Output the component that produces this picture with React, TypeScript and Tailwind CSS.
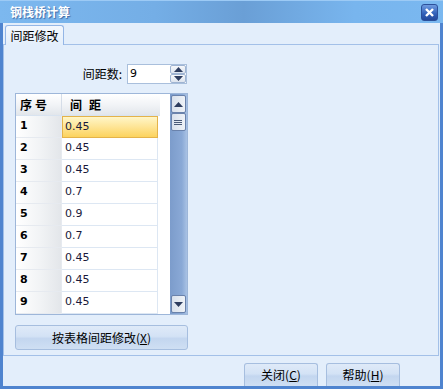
import React from "react";

const cjk = { fontFamily: '"Noto Sans CJK SC", "Liberation Sans", sans-serif' };
const num = { fontFamily: '"DejaVu Sans", "Liberation Sans", sans-serif' };

const rows = ["0.45", "0.45", "0.45", "0.7", "0.9", "0.7", "0.45", "0.45", "0.45"];

function Arrow({ up }: { up: boolean }) {
  return (
    <svg width="9" height="5" viewBox="0 0 9 5">
      {up ? <path d="M0 5 L4.5 0 L9 5 Z" fill="#2d3c5e" /> : <path d="M0 0 L4.5 5 L9 0 Z" fill="#2d3c5e" />}
    </svg>
  );
}

export default function App() {
  return (
    <div className="w-[443px] h-[389px] flex flex-col bg-[#4f84cf] overflow-hidden" style={cjk}>
      {/* title bar */}
      <div className="h-[23px] shrink-0 flex items-center justify-between pl-[10px] pr-[5px] bg-[linear-gradient(90deg,#7cb8ef_0%,#74aee6_35%,#6a9fd6_55%,#78b5ee_80%,#7ab8f0_100%)] border-t border-[#9ccaf5]">
        <span className="text-white text-[12px] font-bold leading-none [text-shadow:1px_1px_1px_#3a6aa8]">钢栈桥计算</span>
        <div className="w-[17px] h-[17px] rounded-[3px] border border-[#2b4f9a] bg-[linear-gradient(180deg,#6f9be0_0%,#2f5fb8_60%,#23489a_100%)] flex items-center justify-center">
          <svg width="9" height="9" viewBox="0 0 9 9">
            <path d="M1 1 L8 8 M8 1 L1 8" stroke="white" strokeWidth="2.4" />
          </svg>
        </div>
      </div>
      {/* body */}
      <div className="flex-1 mx-[3px] mb-[3px] bg-[#e3eefb] flex flex-col">
        {/* tab strip */}
        <div className="h-[21px] shrink-0 flex items-end pl-[2px]">
          <div className="h-[20px] w-[59px] border border-b-0 border-[#94b6e6] rounded-t-[3px] flex items-center justify-center text-[12px] text-black -mb-px relative z-10 bg-[linear-gradient(180deg,#f4f8fd_0%,#e3eefb_100%)]">
            间距修改
          </div>
        </div>
        {/* panel */}
        <div className="h-[312px] mr-[1px] border border-[#a3c0e8] flex flex-col pl-[11px] pt-[19px]">
          {/* spinner row */}
          <div className="flex items-center h-[20px]">
            <div className="w-[112px] text-right text-[12px] text-black pr-[5px] leading-none">间距数:</div>
            <div className="w-[60px] h-[20px] border border-[#a9bfdc] bg-white flex items-center">
              <span className="flex-1 pl-[2px] text-[11px] text-black" style={num}>9</span>
              <div className="w-[16px] h-[18px] flex flex-col">
                <div className="h-[9px] border border-[#9fb4d2] rounded-[2px] bg-[linear-gradient(180deg,#f6f8fb,#dde4ee)] flex items-center justify-center"><Arrow up /></div>
                <div className="h-[9px] border border-[#9fb4d2] rounded-[2px] bg-[linear-gradient(180deg,#f6f8fb,#dde4ee)] flex items-center justify-center"><Arrow up={false} /></div>
              </div>
            </div>
          </div>
          {/* grid */}
          <div className="mt-[9px] w-[173px] h-[222px] border border-[#9db6d9] bg-white flex">
            <div className="w-[153px] flex flex-col">
              <div className="h-[22px] flex border-b border-[#d8e3f0] bg-[linear-gradient(180deg,#ffffff_0%,#f2f4f7_50%,#e2e6eb_100%)]">
                <div className="w-[46px] border-r border-[#d5dde8] pl-[4px] flex items-center text-[12px] font-bold text-black tracking-[3px]">序号</div>
                <div className="w-[96px] pl-[8px] flex items-center text-[12px] font-bold text-black tracking-[7px]">间距</div>
              </div>
              {rows.map((v, i) => (
                <div key={i} className="h-[22px] flex">
                  <div className="w-[46px] border-b border-r border-[#e6eaf0] bg-[linear-gradient(90deg,#ffffff_0%,#f1f3f5_55%,#e3e6ea_100%)] pl-[4px] flex items-center text-[11px] font-bold text-black" style={num}>
                    {i + 1}
                  </div>
                  {i === 0 ? (
                    <div className="w-[96px] border border-[#e4b34a] bg-[linear-gradient(180deg,#fff6c8_0%,#fee69a_45%,#fcd35e_100%)] pl-[2px] flex items-center text-[11px] text-[#1a1a3a]" style={num}>
                      {v}
                    </div>
                  ) : (
                    <div className="w-[96px] border-b border-r border-[#dde7f3] pl-[3px] flex items-center text-[11px] text-[#1a1a3a]" style={num}>
                      {v}
                    </div>
                  )}
                </div>
              ))}
            </div>
            <div className="w-[10px]" />
            {/* scrollbar */}
            <div className="w-[18px] h-full flex flex-col bg-[linear-gradient(90deg,#7c9ccb_0%,#8aa9d6_70%,#a9c2e4_100%)] p-[1px]">
              <div className="h-[18px] border border-[#6a82ab] rounded-[2px] bg-[linear-gradient(90deg,#d9e1ec,#eef2f7)] flex items-center justify-center">
                <Arrow up />
              </div>
              <div className="h-[18px] border border-[#6a82ab] rounded-[2px] bg-[linear-gradient(90deg,#d9e1ec,#eef2f7)] flex flex-col items-center justify-center gap-[1px]">
                <div className="w-[8px] h-px bg-[#4a5a78]" />
                <div className="w-[8px] h-px bg-[#4a5a78]" />
                <div className="w-[8px] h-px bg-[#4a5a78]" />
              </div>
              <div className="flex-1" />
              <div className="h-[18px] border border-[#6a82ab] rounded-[2px] bg-[linear-gradient(90deg,#d9e1ec,#eef2f7)] flex items-center justify-center">
                <Arrow up={false} />
              </div>
            </div>
          </div>
          {/* action button */}
          <div className="mt-[10px] w-[173px] h-[25px] border border-[#a6bedf] rounded-[3px] bg-[linear-gradient(180deg,#dfeaf8_0%,#d3e2f5_45%,#c3d6ef_55%,#cfdff3_100%)] flex items-center justify-center text-[12px] text-black">
            按表格间距修改(<span className="underline">X</span>)
          </div>
        </div>
        {/* footer */}
        <div className="flex-1 flex items-end justify-end pr-[40px] gap-[8px]">
          <div className="w-[74px] h-[23px] border border-b-0 border-[#a6bedf] rounded-t-[3px] bg-[linear-gradient(180deg,#dfeaf8_0%,#d3e2f5_45%,#c3d6ef_55%,#cfdff3_100%)] flex items-center justify-center text-[12px] text-black">
            关闭(<span className="underline">C</span>)
          </div>
          <div className="w-[74px] h-[23px] border border-b-0 border-[#a6bedf] rounded-t-[3px] bg-[linear-gradient(180deg,#dfeaf8_0%,#d3e2f5_45%,#c3d6ef_55%,#cfdff3_100%)] flex items-center justify-center text-[12px] text-black">
            帮助(<span className="underline">H</span>)
          </div>
        </div>
      </div>
    </div>
  );
}
